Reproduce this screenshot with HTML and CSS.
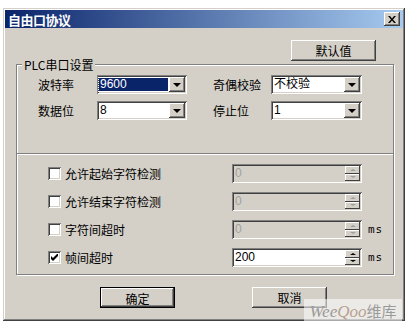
FILE: index.html
```html
<!DOCTYPE html>
<html lang="zh">
<head>
    <meta charset="UTF-8">
    <title>自由口协议</title>
    <link rel="stylesheet" href="styles.css">
</head>
<body>
    <div class="window">
        <div class="titlebar">
            <span class="title">自由口协议</span>
            <span class="close-btn">
                <svg width="8" height="7" viewBox="0 0 8 7"><path d="M0 0h2l2 2.5L6 0h2L5 3.5 8 7H6L4 4.5 2 7H0l3-3.5z" fill="#000"/></svg>
            </span>
        </div>

        <div class="top-row">
            <button class="btn">默认值</button>
        </div>

        <div class="group">
            <div class="group-title">PLC串口设置</div>

            <div class="port-settings">
                <div class="port-row">
                    <span class="label">波特率</span>
                    <div class="combo focused">
                        <span class="combo-value">9600</span>
                        <span class="drop-btn"><i class="arrow-down"></i></span>
                    </div>
                    <span class="label second">奇偶校验</span>
                    <div class="combo wide">
                        <span class="combo-value">不校验</span>
                        <span class="drop-btn"><i class="arrow-down"></i></span>
                    </div>
                </div>
                <div class="port-row">
                    <span class="label">数据位</span>
                    <div class="combo">
                        <span class="combo-value">8</span>
                        <span class="drop-btn"><i class="arrow-down"></i></span>
                    </div>
                    <span class="label second">停止位</span>
                    <div class="combo wide">
                        <span class="combo-value">1</span>
                        <span class="drop-btn"><i class="arrow-down"></i></span>
                    </div>
                </div>
            </div>

            <div class="separator"></div>

            <div class="options">
                <div class="option-row">
                    <span class="checkbox"></span>
                    <span class="option-label">允许起始字符检测</span>
                    <div class="spin disabled">
                        <span class="spin-value">0</span>
                        <span class="spin-btns"><span class="spin-btn"><i class="arrow-up"></i></span><span class="spin-btn"><i class="arrow-down small"></i></span></span>
                    </div>
                    <span class="unit"></span>
                </div>
                <div class="option-row">
                    <span class="checkbox"></span>
                    <span class="option-label">允许结束字符检测</span>
                    <div class="spin disabled">
                        <span class="spin-value">0</span>
                        <span class="spin-btns"><span class="spin-btn"><i class="arrow-up"></i></span><span class="spin-btn"><i class="arrow-down small"></i></span></span>
                    </div>
                    <span class="unit"></span>
                </div>
                <div class="option-row">
                    <span class="checkbox"></span>
                    <span class="option-label">字符间超时</span>
                    <div class="spin disabled">
                        <span class="spin-value">0</span>
                        <span class="spin-btns"><span class="spin-btn"><i class="arrow-up"></i></span><span class="spin-btn"><i class="arrow-down small"></i></span></span>
                    </div>
                    <span class="unit">ms</span>
                </div>
                <div class="option-row">
                    <span class="checkbox checked">
                        <svg width="7" height="7" viewBox="0 0 7 7"><path d="M0 2v3l2 2 5-5V-1L2 4z" fill="#000"/></svg>
                    </span>
                    <span class="option-label">帧间超时</span>
                    <div class="spin">
                        <span class="spin-value">200</span>
                        <span class="spin-btns"><span class="spin-btn"><i class="arrow-up"></i></span><span class="spin-btn"><i class="arrow-down small"></i></span></span>
                    </div>
                    <span class="unit">ms</span>
                </div>
            </div>
        </div>

        <div class="footer">
            <button class="btn default">确定</button>
            <button class="btn">取消</button>
        </div>
    </div>

    <div class="watermark"><span class="wm-latin">Wee<b>Qoo</b></span>维库</div>
</body>
</html>
```

FILE: styles.css
```css
body {
    margin: 0;
    background: #fff;
    font-family: "Liberation Sans", "Noto Sans CJK SC", sans-serif;
    font-size: 12px;
    color: #000;
}

.window {
    position: relative;
    margin: 8px 0 0 3px;
    width: 402px;
    height: 313px;
    box-sizing: border-box;
    padding: 2px;
    background: #d4d0c8;
    box-shadow: inset -1px -1px #404040, inset 1px 1px #d4d0c8,
        inset -2px -2px #808080, inset 2px 2px #fff;
}

.titlebar {
    height: 18px;
    display: flex;
    align-items: center;
    justify-content: space-between;
    padding: 0 3px 0 3px;
    background: linear-gradient(to right, #0a246a, #a6caf0);
}

.title {
    color: #fff;
    font-family: "Noto Sans CJK SC", sans-serif;
    font-weight: bold;
    font-size: 13px;
    letter-spacing: -0.5px;
}

.close-btn {
    width: 16px;
    height: 14px;
    box-sizing: border-box;
    display: flex;
    align-items: center;
    justify-content: center;
    background: #d4d0c8;
    box-shadow: inset -1px -1px #404040, inset 1px 1px #fff,
        inset -2px -2px #808080;
}

/* buttons */
.btn {
    font-family: "Noto Sans CJK SC", sans-serif;
    font-size: 12px;
    width: 85px;
    height: 21px;
    padding: 0;
    border: none;
    background: #d4d0c8;
    box-shadow: inset -1px -1px #404040, inset 1px 1px #fff,
        inset -2px -2px #808080, inset 2px 2px #d4d0c8;
    line-height: 21px;
}

.btn.default {
    border: 1px solid #000;
}

.top-row {
    display: flex;
    justify-content: flex-end;
    padding: 12px 27px 0 0;
}

/* group box */
.group {
    position: relative;
    margin: 3px 0 0 11px;
    width: 378px;
    height: 211px;
    box-sizing: border-box;
    border: 1px solid #808080;
    box-shadow: inset 1px 1px #fff, 1px 1px #fff;
}

.group-title {
    position: absolute;
    top: -8px;
    left: 5px;
    padding: 0 2px;
    background: #d4d0c8;
    font-family: "Noto Sans CJK SC", sans-serif;
    line-height: 15px;
}

.port-settings {
    padding-top: 10px;
    height: 88px;
    box-sizing: border-box;
}

.port-row {
    display: flex;
    align-items: center;
    height: 19px;
    padding-left: 21px;
}

.port-row + .port-row {
    margin-top: 7px;
}

.label {
    width: 59px;
    font-family: "Noto Sans CJK SC", sans-serif;
}

.label.second {
    margin-left: 26px;
    width: 58px;
}

/* combo box */
.combo {
    width: 90px;
    height: 19px;
    box-sizing: border-box;
    padding: 2px;
    display: flex;
    background: #fff;
    box-shadow: inset 1px 1px #808080, inset -1px -1px #fff,
        inset 2px 2px #404040, inset -2px -2px #d4d0c8;
}

.combo.wide {
    width: 91px;
}

.combo-value {
    flex: 1;
    padding-left: 1px;
    line-height: 15px;
}

.combo.focused .combo-value {
    margin: 1px 1px 1px 0;
    line-height: 13px;
    background: #0a246a;
    color: #fff;
    outline: 1px dotted #fff;
}

.drop-btn {
    width: 16px;
    height: 15px;
    box-sizing: border-box;
    display: flex;
    align-items: center;
    justify-content: center;
    background: #d4d0c8;
    box-shadow: inset -1px -1px #404040, inset 1px 1px #fff,
        inset -2px -2px #808080;
}

.arrow-down {
    width: 0;
    height: 0;
    border-left: 4px solid transparent;
    border-right: 4px solid transparent;
    border-top: 4px solid #000;
}

.arrow-down.small {
    border-left-width: 3px;
    border-right-width: 3px;
    border-top-width: 2px;
}

.arrow-up {
    width: 0;
    height: 0;
    border-left: 3px solid transparent;
    border-right: 3px solid transparent;
    border-bottom: 2px solid #000;
}

.separator {
    border-top: 1px solid #808080;
    border-bottom: 1px solid #fff;
}

/* options */
.options {
    padding-top: 9px;
}

.option-row {
    display: flex;
    align-items: center;
    height: 19px;
    padding-left: 31px;
}

.option-row + .option-row {
    margin-top: 9px;
}

.checkbox {
    width: 13px;
    height: 13px;
    box-sizing: border-box;
    display: flex;
    align-items: center;
    justify-content: center;
    background: #fff;
    box-shadow: inset 1px 1px #808080, inset -1px -1px #fff,
        inset 2px 2px #404040, inset -2px -2px #d4d0c8;
}

.option-label {
    width: 167px;
    margin-left: 4px;
    font-family: "Noto Sans CJK SC", sans-serif;
}

.spin {
    width: 130px;
    height: 19px;
    box-sizing: border-box;
    padding: 2px;
    display: flex;
    background: #fff;
    box-shadow: inset 1px 1px #808080, inset -1px -1px #fff,
        inset 2px 2px #404040, inset -2px -2px #d4d0c8;
}

.spin.disabled {
    background: #d4d0c8;
    color: #a0a0a0;
}

.spin-value {
    flex: 1;
    padding-left: 1px;
    line-height: 15px;
}

.spin-btns {
    width: 15px;
    display: flex;
    flex-direction: column;
}

.spin-btn {
    flex: 1;
    display: flex;
    align-items: center;
    justify-content: center;
    background: #d4d0c8;
    box-shadow: inset -1px -1px #404040, inset 1px 1px #fff;
}

.spin.disabled .arrow-up {
    border-bottom-color: #a0a0a0;
}

.spin.disabled .arrow-down {
    border-top-color: #a0a0a0;
}

.unit {
    margin-left: 6px;
    font-family: "DejaVu Sans Mono", monospace;
    font-size: 11px;
    letter-spacing: 1px;
}

.footer {
    display: flex;
    gap: 77px;
    padding: 12px 0 0 95px;
}

.footer .btn {
    width: 75px;
}

.watermark {
    position: absolute;
    left: 304px;
    top: 299px;
    width: 98px;
    height: 23px;
    background: rgba(255, 255, 255, 0.55);
    color: #9a9a9a;
    font-family: "Noto Sans CJK SC", sans-serif;
    font-size: 15px;
    line-height: 23px;
    text-align: center;
}

.wm-latin {
    font-family: "Liberation Serif", serif;
    font-style: italic;
    font-size: 17px;
}

.wm-latin b {
    font-weight: normal;
    color: #b8a090;
}
```
